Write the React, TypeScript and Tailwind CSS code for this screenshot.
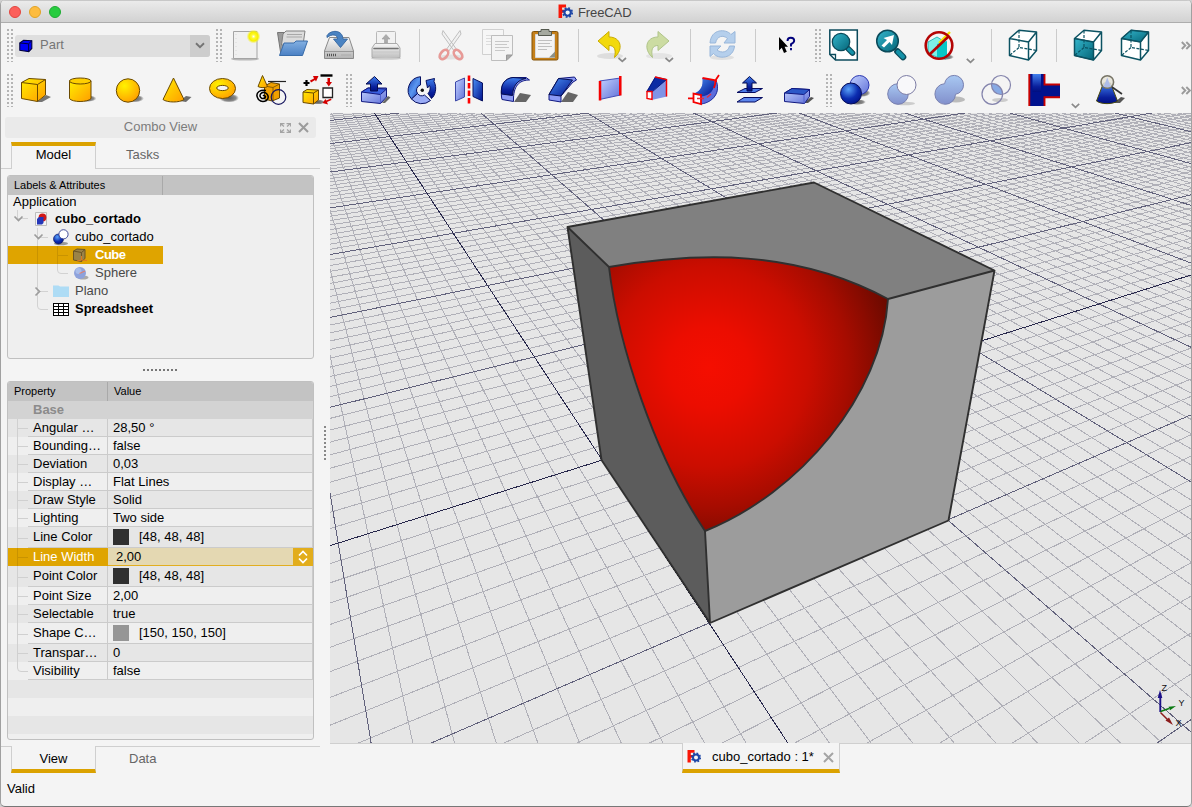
import React from "react";

type Kids = { children?: React.ReactNode };

/* ---------- toolbar primitives ---------- */

// Each icon is drawn in window coordinates; x/y name the window position of its cell.
function Ico({ x, y = 23, ml = "ml-[15px]", children }: Kids & { x: number; y?: number; ml?: string }) {
  return (
    <svg className={`h-[45px] w-8 shrink-0 overflow-visible ${ml}`} viewBox={`${x} ${y} 32 45`}>
      {children}
    </svg>
  );
}

function Grip({ ml }: { ml: string }) {
  return (
    <svg className={`h-[33px] w-[6px] shrink-0 ${ml}`} viewBox="0 0 6 33" shapeRendering="crispEdges">
      <path d="M1 0V33M5 0V33" stroke="#b4b4b4" strokeWidth="2" strokeDasharray="2 2" />
    </svg>
  );
}

function Sep({ ml }: { ml: string }) {
  return <div className={`h-[33px] w-px shrink-0 bg-[#cbcbcb] ${ml}`} />;
}

function Drop({ ml }: { ml: string }) {
  return (
    <svg className={`mt-[30px] h-[6px] w-[9px] shrink-0 ${ml}`} viewBox="0 0 9 6">
      <path d="M.8 .8L4.5 4.3L8.2 .8" fill="none" stroke="#8a8a8a" strokeWidth="1.7" />
    </svg>
  );
}

function More({ ml }: { ml: string }) {
  return (
    <svg className={`h-[9px] w-[10px] shrink-0 ${ml}`} viewBox="0 0 10 9">
      <path d="M.8 1L4.3 4.5L.8 8M5.3 1L8.8 4.5L5.3 8" fill="none" stroke="#9b9b9b" strokeWidth="1.9" />
    </svg>
  );
}

function Defs() {
  return (
    <svg className="absolute h-0 w-0">
      <defs>
        <linearGradient id="yel" x1="0" y1="0" x2="1" y2="1">
          <stop offset="0" stopColor="#ffee00" /><stop offset="1" stopColor="#ff9d00" />
        </linearGradient>
        <radialGradient id="yelr" cx=".35" cy=".3" r=".8">
          <stop offset="0" stopColor="#fff200" /><stop offset="1" stopColor="#ff9a00" />
        </radialGradient>
        <linearGradient id="blu" x1="0" y1="0" x2="1" y2="1">
          <stop offset="0" stopColor="#4a90f5" /><stop offset="1" stopColor="#00108c" />
        </linearGradient>
        <linearGradient id="ring" x1="0" y1="0" x2="1" y2="1">
          <stop offset="0" stopColor="#1c48b8" /><stop offset=".5" stopColor="#5a96f0" /><stop offset="1" stopColor="#1438b0" />
        </linearGradient>
        <radialGradient id="blur" cx=".38" cy=".3" r=".75">
          <stop offset="0" stopColor="#58a0f8" /><stop offset=".6" stopColor="#0c2db0" /><stop offset="1" stopColor="#00128a" />
        </radialGradient>
        <linearGradient id="lbl" x1="0" y1="0" x2="1" y2="1">
          <stop offset="0" stopColor="#c3d2ff" /><stop offset="1" stopColor="#6070d8" />
        </linearGradient>
        <linearGradient id="pbl" x1="0" y1="0" x2="0" y2="1">
          <stop offset="0" stopColor="#a8c8f2" /><stop offset="1" stopColor="#8290cc" />
        </linearGradient>
        <linearGradient id="dbl" x1="0" y1="0" x2="0" y2="1">
          <stop offset="0" stopColor="#4080ee" /><stop offset=".7" stopColor="#0a209c" /><stop offset="1" stopColor="#000e80" />
        </linearGradient>
        <linearGradient id="teal" x1="0" y1="0" x2="1" y2="1">
          <stop offset="0" stopColor="#34b6cc" /><stop offset="1" stopColor="#046578" />
        </linearGradient>
        <linearGradient id="fold" x1="0" y1="0" x2="0" y2="1">
          <stop offset="0" stopColor="#83b0e2" /><stop offset="1" stopColor="#4a80c4" />
        </linearGradient>
        <linearGradient id="gry" x1="0" y1="0" x2="0" y2="1">
          <stop offset="0" stopColor="#f8f8f8" /><stop offset="1" stopColor="#b4b4b4" />
        </linearGradient>
        <radialGradient id="sun">
          <stop offset="0" stopColor="#fffff0" /><stop offset=".3" stopColor="#fff830" /><stop offset=".65" stopColor="#f6f000" /><stop offset="1" stopColor="#f8f040" stopOpacity="0" />
        </radialGradient>
        <radialGradient id="shd">
          <stop offset="0" stopColor="#333" stopOpacity=".8" /><stop offset=".7" stopColor="#444" stopOpacity=".6" /><stop offset="1" stopColor="#555" stopOpacity="0" />
        </radialGradient>
        <radialGradient id="red" gradientUnits="userSpaceOnUse" cx="709" cy="367" r="200">
          <stop offset="0" stopColor="#f50e00" /><stop offset=".2" stopColor="#ec0d00" /><stop offset=".5" stopColor="#cb0d00" />
          <stop offset=".7" stopColor="#a60c00" /><stop offset=".82" stopColor="#8a0b00" /><stop offset=".94" stopColor="#6c0a00" />
        </radialGradient>
      </defs>
    </svg>
  );
}

function Logo({ cls }: { cls: string }) {
  return (
    <svg className={`shrink-0 ${cls}`} viewBox="0 0 14 14">
      <path d="M.5 .5H7.5V3.3H3.8V5.4H6.5V8.2H3.8V13H.5Z" fill="#f91607" />
      <g stroke="#1d46a6" fill="none">
        <circle cx="9" cy="8" r="3" fill="#f4f4f4" strokeWidth="2" />
        <circle cx="9" cy="8" r="4.3" strokeWidth="1.6" strokeDasharray="1.7 1.68" />
      </g>
    </svg>
  );
}

/* ---------- toolbars ---------- */

function FileBar() {
  return (
    <div className="flex h-[45px] items-center">
      <Grip ml="ml-[6px]" />
      <div className="ml-[2px] flex h-[22px] w-[195px] shrink-0 items-center overflow-hidden rounded-[3px] bg-[#dfdfdf]">
        <svg className="ml-[4px] h-[14px] w-[14px]" viewBox="0 0 14 14">
          <path d="M.8 4L4.6 1.2L12.8 1.7V9.5L9.8 12.6L.8 11.2Z" fill="#0000f4" stroke="#000040" strokeWidth="1.1" />
          <path d="M.8 4L9.6 4.8L12.8 1.7M9.6 4.8V12.5" fill="none" stroke="#000040" strokeWidth="1" />
        </svg>
        <span className="ml-[7px] flex-1 pb-[3px] text-[13px] leading-none text-[#757575]">Part</span>
        <div className="flex h-full w-5 items-center justify-center bg-[#cdcdcd]">
          <svg className="h-[7px] w-[10px]" viewBox="0 0 10 7"><path d="M1 1.3L5 5.2L9 1.3" fill="none" stroke="#747474" strokeWidth="1.9" /></svg>
        </div>
      </div>
      <Grip ml="ml-[6px]" />
      <Ico x={229} ml="ml-[7px]">
        <ellipse cx="245" cy="59" rx="14" ry="1.6" fill="#b8b8b8" />
        <path d="M233.500 31.500H257V58.500H233.500Z" fill="#f0f0f0" stroke="#a4a4a4" />
        <path d="M236 34V57" stroke="#d8d8d8" strokeDasharray="1 3" />
        <circle cx="253.500" cy="36.500" r="7" fill="url(#sun)" />
      </Ico>
      <Ico x={276}>
        <path d="M277.500 32.500H284L286 55H281Z" fill="#9b9b9b" stroke="#757575" />
        <path d="M283 34L286 31H305L303 45H281.500Z" fill="#dcdcdc" stroke="#808080" />
        <path d="M287 34.500H302M286.500 37H302" stroke="#a8a8a8" />
        <path d="M284 43H294L296 41H307.500L302.500 55.500H279.500Z" fill="url(#fold)" stroke="#3a6daa" strokeLinejoin="round" />
      </Ico>
      <Ico x={323}>
        <path d="M329.500 37.500H349L353.500 51V58.500H324.500V51Z" fill="url(#gry)" stroke="#8a8a8a" strokeLinejoin="round" />
        <path d="M325 51.500H353" stroke="#999" /><path d="M327 55H337" stroke="#555" strokeWidth="2.600" strokeDasharray="1 1" /><path d="M341 55H351" stroke="#aaa" />
        <path d="M327 35.500C331 29.500 342.500 29.500 343 39H347.500L340.500 47.500L333.500 39H337.500C337.500 34.500 332 33.500 327 37.500Z" fill="#4a83c2" stroke="#34659f" strokeWidth=".9" />
      </Ico>
      <Ico x={370}>
        <g opacity=".8">
          <path d="M376.500 44V32.500Q376.500 31.500 377.500 31.500H394.500Q395.500 31.500 395.500 32.500V44" fill="#f2f2f2" stroke="#aaa" />
          <path d="M386 34.500L390 39H387.500V43H384.500V39H382Z" fill="#999" stroke="#888" strokeWidth=".6" />
          <path d="M375 43.500H397L400 48V57.500H372V48Z" fill="url(#gry)" stroke="#999" strokeLinejoin="round" />
          <path d="M374 48.500H398" stroke="#555" strokeWidth="1.600" strokeLinecap="round" /><path d="M373 52H399" stroke="#bbb" />
        </g>
        <ellipse cx="386" cy="58.500" rx="15" ry="1.300" fill="#ccc" />
      </Ico>
      <Sep ml="ml-[17px]" />
      <Ico x={435}>
        <ellipse cx="451" cy="57" rx="13" ry="2.500" fill="#e2e2e2" />
        <path d="M443 30.500L457 50L454.500 51.500L442 34ZM460 30.500L446 50L448.500 51.500L461 34Z" fill="#f1f1f1" stroke="#b9b9b9" strokeWidth=".9" />
        <ellipse cx="444" cy="54.500" rx="5.300" ry="3.300" fill="none" stroke="#e79a97" strokeWidth="2.700" transform="rotate(-50 444 54.500)" />
        <ellipse cx="458" cy="54.500" rx="5.300" ry="3.300" fill="none" stroke="#e79a97" strokeWidth="2.700" transform="rotate(50 458 54.500)" />
      </Ico>
      <Ico x={482}>
        <path d="M482.500 29.500H503.500V54.500H482.500Z" fill="#f6f6f6" stroke="#d0d0d0" />
        <path d="M486 35.500H495M486 38.500H491M486 41.500H491M486 44.500H491" stroke="#dcdcdc" />
        <path d="M491.500 35.500H512.500V55L507 60.500H491.500Z" fill="#f4f4f4" stroke="#bdbdbd" />
        <path d="M495 41.500H509M495 44.500H507M495 47.500H509M495 50.500H505" stroke="#c8c8c8" />
        <path d="M506.500 60V55H512Z" fill="#aaa" stroke="#999" />
      </Ico>
      <Ico x={529}>
        <rect x="532" y="31.500" width="26" height="28.500" rx="1.500" fill="#c5801a" stroke="#825209" />
        <path d="M535.500 34.500H554.500V57.500H535.500Z" fill="#f4f4f4" stroke="#d8d8d8" />
        <path d="M538 40.500H552M538 43.500H550M538 46.500H552M538 49.500H547" stroke="#c0c0c0" />
        <path d="M539 31.500H541V29.500H549V31.500H551.500V35.500H538.500V31.500Z" fill="#a5a99f" stroke="#555a50" />
        <path d="M549 57.500L555 51.500V57.500Z" fill="#8b8f86" />
      </Ico>
      <Sep ml="ml-[17px]" />
      <Ico x={596} ml="ml-[17px]">
        <ellipse cx="610" cy="56" rx="13" ry="3" fill="#ddd" />
        <path d="M598 41L609 31.500V37C621 37 624 49 614.500 57.500C616.500 49 614 45.500 609 45.500V50.500Z" fill="#f2d90c" stroke="#c9ab00" strokeLinejoin="round" />
        <path d="M618.500 58L622.300 61.300L626 58" fill="none" stroke="#8a8a8a" strokeWidth="1.700" />
      </Ico>
      <Ico x={643}>
        <ellipse cx="659" cy="56" rx="13" ry="3" fill="#e4e4e4" />
        <path d="M669 41L658 31.500V37C646 37 643 49 652.500 57.500C650.500 49 653 45.500 658 45.500V50.500Z" fill="#ccdca2" stroke="#b0c48a" strokeLinejoin="round" />
        <path d="M665.500 58L669.300 61.300L673 58" fill="none" stroke="#8a8a8a" strokeWidth="1.700" />
      </Ico>
      <Sep ml="ml-[15px]" />
      <Ico x={706}>
        <ellipse cx="722" cy="57.500" rx="12" ry="2.500" fill="#e0e0e0" />
        <path d="M710 43C711 28.500 726 28.500 731 34.500L735 31.500V43H724L727.500 38.500C723 34.500 717 36 715.500 43Z" fill="#b5cfec" stroke="#98b6da" strokeLinejoin="round" />
        <path d="M734.500 46C733.500 59 718 59.500 713.500 53.500L710 56.500V46H721L717 50C721.500 53.500 728 52.500 729.500 46Z" fill="#b5cfec" stroke="#98b6da" strokeLinejoin="round" />
      </Ico>
      <Sep ml="ml-[17px]" />
      <Ico x={770} ml="ml-[14px]">
        <path d="M779 37V50.500L781.800 47.800L784 53L786.800 51.800L784.600 46.800H788Z" fill="#000" />
        <path d="M787.500 41Q787.500 37.800 790.800 37.800Q794.200 37.800 794.200 40.800Q794.200 42.500 791 44.200V46.500M791 48V50.300" fill="none" stroke="#00007c" strokeWidth="1.900" />
      </Ico>
      <Grip ml="ml-[13px]" />
      <Ico x={827} ml="ml-[6px]">
        <path d="M829.800 30H857.300V60H835.500L829.800 54.500Z" fill="#fff" stroke="#0c4b5c" strokeWidth="1.500" />
        <path d="M830 54.500H835.500V60" fill="none" stroke="#0c4b5c" strokeWidth="1.300" />
        <path d="M848 48.500L852.500 53" stroke="#0b4a5a" strokeWidth="5.600" strokeLinecap="round" />
        <path d="M848.500 49L852.300 52.800" stroke="#1391a8" strokeWidth="3.400" strokeLinecap="round" />
        <circle cx="841" cy="42" r="8.700" fill="url(#teal)" stroke="#0b4a5a" strokeWidth="1.300" />
      </Ico>
      <Ico x={874}>
        <path d="M897.500 51.500L903 57" stroke="#0b4a5a" strokeWidth="6.600" strokeLinecap="round" />
        <path d="M898 52L902.800 56.800" stroke="#1391a8" strokeWidth="4.200" strokeLinecap="round" />
        <circle cx="887.500" cy="41" r="10.800" fill="url(#teal)" stroke="#0b4a5a" strokeWidth="1.500" />
        <path d="M881.500 45.500L887 40L883.500 38L894 35L892 45L889.500 42L884 47.500Z" fill="#fff" />
      </Ico>
      <Ico x={923} ml="ml-[17px]">
        <ellipse cx="945" cy="57" rx="9" ry="3" fill="url(#shd)" />
        <path d="M928 42L937 37L946 42.500V59L937 57L928 53.500Z" fill="#7ef0e8" stroke="#1aa" strokeWidth=".8" />
        <path d="M937 44L947 41V57L937 59Z" fill="#08c8c8" />
        <path d="M950 32L939 43" stroke="#f3e500" strokeWidth="2.400" />
        <circle cx="939" cy="45.500" r="13.300" fill="none" stroke="#b40404" strokeWidth="2.600" />
        <path d="M929.500 54.500L948.500 36.500" stroke="#b40404" strokeWidth="2.600" />
      </Ico>
      <Drop ml="ml-[11px]" />
      <Sep ml="ml-[16px]" />
      <Ico x={1007}><WireCube x={1009} /></Ico>
      <Sep ml="ml-[17px]" />
      <Ico x={1071} ml="ml-[14px]"><WireCube x={1074} face="M0 9.500L19 13V31L0 26.500Z" /></Ico>
      <Ico x={1118}><WireCube x={1121} face="M0 9.500L9.500 1.200L27 3L19 13Z" /></Ico>
      <More ml="ml-[31px]" />
    </div>
  );
}

function WireCube({ x, face }: { x: number; face?: string }) {
  return (
    <g transform={`translate(${x + 0.5} 29)`} fill="none" stroke="#0b5262">
      <path d="M0 9.500L9.500 1.200L27 3V21.500L19 31L0 26.500Z" fill="#fff" stroke="none" />
      {face && <path d={face} fill="url(#teal)" />}
      <path d="M9.500 1.500V18.500L27 21.500M9.500 18.500L0 26.500" strokeDasharray="3 1.500" strokeWidth="1.200" />
      <path d="M0 9.500L9.500 1.200L27 3V21.500L19 31L0 26.500ZM0 9.500L19 13L27 3M19 13V31" strokeWidth="1.500" strokeLinejoin="round" />
    </g>
  );
}

function PartBar() {
  const y = 68;
  return (
    <div className="flex h-[45px] items-center">
      <Grip ml="ml-[6px]" />
      <Ico x={19} y={y} ml="ml-[6px]">
        <path d="M37 102L46 95L51 97L42 102Z" fill="#555" opacity=".8" />
        <path d="M21.500 82.500L29 78.500L45.500 79.500V95L37.500 101.500L21.500 98.500Z" fill="url(#yel)" stroke="#6b4a00" strokeLinejoin="round" />
        <path d="M21.500 82.500L37.500 84.500L45.500 79.500M37.500 84.500V101.500" fill="none" stroke="#6b4a00" />
      </Ico>
      <Ico x={66} y={y}>
        <ellipse cx="87" cy="98.500" rx="9.500" ry="3.500" fill="url(#shd)" />
        <path d="M69.500 81V98.500C72 102.500 88 102.500 91 98.500V81Z" fill="url(#yel)" stroke="#6b4a00" />
        <ellipse cx="80.200" cy="81" rx="10.800" ry="3" fill="#ffcf00" stroke="#6b4a00" />
      </Ico>
      <Ico x={113} y={y}>
        <ellipse cx="134" cy="98.500" rx="10" ry="4" fill="url(#shd)" />
        <circle cx="128" cy="90.500" r="11.700" fill="url(#yelr)" stroke="#6b4a00" />
      </Ico>
      <Ico x={160} y={y}>
        <path d="M180 101L186 96L191.500 97L186 102Z" fill="#555" opacity=".85" />
        <path d="M173.500 78L163 99.500C167 102.800 180 102.800 184 99.500Z" fill="url(#yel)" stroke="#6b4a00" strokeLinejoin="round" />
      </Ico>
      <Ico x={207} y={y}>
        <ellipse cx="229" cy="98" rx="10" ry="4.500" fill="url(#shd)" />
        <ellipse cx="222.500" cy="88.500" rx="13" ry="10" fill="url(#yelr)" stroke="#6b4a00" />
        <ellipse cx="222.500" cy="88" rx="5.800" ry="2.600" fill="#f4f4f4" stroke="#6b4a00" />
      </Ico>
      <Ico x={254} y={y}>
        <path d="M264.500 86L271 82.500L279.500 84V98L272 101L264.500 99Z" fill="#f0a000" stroke="#6b4a00" />
        <path d="M264.500 86L273 87.500L279.500 84M273 87.500V100" fill="none" stroke="#8a5c00" />
        <path d="M262.500 75.500L258 86.500C260 88 266 88 267.500 86.500Z" fill="url(#yel)" stroke="#6b4a00" />
        <path d="M268 81.500H286" stroke="#222" strokeWidth="1.200" />
        <path d="M263 96Q264.500 94.500 265.500 96.500Q265 99 262 98.500Q259 97 260.500 94Q263 91 266.500 93.500Q270 97 266.500 100.500Q262 103 258.500 99.500Q255 94.500 259 91.500Q262 89.500 266 90.500" fill="none" stroke="#000" strokeWidth="1.500" />
        <circle cx="278.500" cy="97" r="7.300" fill="none" stroke="#15155e" strokeWidth="1.200" />
      </Ico>
      <Ico x={301} y={y}>
        <ellipse cx="318" cy="102" rx="7" ry="2.500" fill="url(#shd)" />
        <path d="M303 92L307 89.500L318.500 90V100L313.500 104L303 102.500Z" fill="url(#yel)" stroke="#6b4a00" />
        <path d="M303 92L313.500 93L318.500 90M313.500 93V104" fill="none" stroke="#6b4a00" />
        <path d="M306.500 80V86M303.500 83H309.500" stroke="#000" strokeWidth="2.200" />
        <path d="M320.500 75.500H332.500" stroke="#000" strokeWidth="2.400" />
        <path d="M323 88H332.500V97.500H323Z" fill="#fff" stroke="#222" strokeWidth="1.300" />
        <path d="M310 80.500L314 78.500L313 76L318.500 76L316 81.500L315 80L311 82.500ZM327.500 78H330V82H332L328.800 86.500L325.800 82H327.500ZM331.500 100L327 102L328 104.500L322.500 103L325.500 99L326.300 100.600L331 98.500Z" fill="#d40000" />
      </Ico>
      <Grip ml="ml-[13px]" />
      <Ico x={359} y={y} ml="ml-[7px]">
        <path d="M382 103L388 96L390.500 97.500L385 103Z" fill="#666" />
        <path d="M361.500 92L368 88H386.500V97L380.500 103.500L361.500 101.500Z" fill="url(#lbl)" stroke="#101880" strokeLinejoin="round" />
        <path d="M361.500 92L380.500 94.500L386.500 89L368 88Z" fill="#3a5fe0" stroke="#101880" strokeLinejoin="round" />
        <path d="M380.500 94.500V103" stroke="#5060d0" />
        <path d="M374.500 76.500L382 84H377.500V91H370.500V84H366Z" fill="url(#dbl)" stroke="#050c50" strokeLinejoin="round" />
      </Ico>
      <Ico x={406} y={y}>
        <path d="M420.500 76.700A13.500 13.500 0 0 0 411.500 99L417.500 93.500A5.500 5.500 0 0 1 420.500 85Z" fill="url(#ring)" stroke="#071060" />
        <path d="M411.500 99L417.500 93.500A5.500 5.500 0 0 0 424.500 95L430.500 100.500A13.500 13.500 0 0 1 411.500 99Z" fill="#9aacf6" stroke="#071060" />
        <path d="M426 80.500L434.500 78.500L434 81.500C437.500 88 435 96 431.500 98.500L428 93.500C430.500 90.500 430.500 87.500 429.500 85.500L427.500 88Z" fill="url(#dbl)" stroke="#071060" strokeLinejoin="round" />
        <circle cx="422.300" cy="90.300" r="1.700" fill="#111" />
      </Ico>
      <Ico x={453} y={y}>
        <path d="M455.500 82L464.500 78V97L455.500 101Z" fill="url(#lbl)" stroke="#3c48a8" />
        <path d="M473 78.500L482.500 83V101L473 96.500Z" fill="url(#blu)" stroke="#071060" />
        <path d="M469 75.500V104" stroke="#f00" strokeWidth="2.600" strokeDasharray="5.500 2" />
      </Ico>
      <Ico x={500} y={y}>
        <path d="M514 102L520 93L531 95L526 102Z" fill="#666" />
        <path d="M501.500 97C500 84 505 78.500 513 77.500H526L529.500 80C521 80 514 84 513.500 98V101.500L502 99.500Z" fill="#8c9af4" stroke="#101880" />
        <path d="M501.500 94C500.500 84 505 78.500 513 77.500L526 78.500C517 80 513 86 512.500 95.500Z" fill="url(#dbl)" stroke="#050c50" />
      </Ico>
      <Ico x={547} y={y}>
        <path d="M561 102L568 92L578 95L573 102Z" fill="#666" />
        <path d="M549 94.500L558.500 78.500L574.500 77L576.500 80L573 82L561 96V102L549 100Z" fill="#8c9af4" stroke="#101880" />
        <path d="M549 94.500L558.500 78.500L572.500 80L561 96Z" fill="url(#blu)" stroke="#050c50" />
      </Ico>
      <Ico x={594} y={y}>
        <path d="M599.500 81L620.500 78V95L599.500 99.500Z" fill="url(#lbl)" stroke="#4450b8" />
        <path d="M600 81V100.500M620.300 76V95.500" stroke="#f50000" strokeWidth="2.500" />
      </Ico>
      <Ico x={641} y={y}>
        <path d="M655 77L646.500 91.500L652 92L667 80L656 77Z" fill="#0c2ba4" />
        <path d="M652 91.500L667 79.500V96.500L651.500 100Z" fill="#7f93e6" />
        <path d="M655.500 77L666.500 79.500L652 92L647 91.500L655.500 77" fill="none" stroke="#0a1a80" />
        <path d="M655 77L666.500 79.500V96.500" fill="none" stroke="#f50000" strokeWidth="1.500" />
        <path d="M647 91.500H652V99.500L647 98.500Z" fill="#fff" stroke="#f50000" strokeWidth="1.400" />
      </Ico>
      <Ico x={688} y={y}>
        <path d="M702.500 78L716 80.500C722 92 713 103 701 104L694 93.500C701 91 703.500 86 702.500 78Z" fill="#5c6cdc" />
        <path d="M702.500 78L714 80C716 89 710 96 701 96.500L694 93.500C701 91 703.500 86 702.500 78Z" fill="url(#blu)" />
        <path d="M716 80.500C721 92 713 102.500 701 104" fill="none" stroke="#2535a0" />
        <path d="M702.500 78L714.500 80C716 81 715 85 714 88M719 75L716 79.500V82" fill="none" stroke="#f50000" strokeWidth="1.800" />
        <path d="M688 98.300H693.500V93.500L701 95V104L693.500 102V98.500" fill="#fff" stroke="#f50000" strokeWidth="1.800" />
        <path d="M697 98.500H704M707 97.500L711 94" stroke="#e03040" strokeWidth="1.600" />
      </Ico>
      <Ico x={735} y={y}>
        <path d="M744 97.500L737 102H755L762.500 97.500Z" fill="#5c86ec" stroke="#060c60" strokeLinejoin="round" />
        <path d="M745 88.500L737 92.500H755L762.500 88.500Z" fill="#4a7ae8" stroke="#060c60" strokeLinejoin="round" />
        <path d="M749.500 76.500L756.500 83H752V91H747V83H742.500Z" fill="url(#dbl)" stroke="#050c50" strokeLinejoin="round" />
      </Ico>
      <Ico x={782} y={y}>
        <path d="M804 103L811 97L814 98L808 103Z" fill="#555" />
        <path d="M784.500 93L792 88.500L809.500 89.500V96.500L804.500 103.500L784.500 101.500Z" fill="url(#lbl)" stroke="#101880" strokeLinejoin="round" />
        <path d="M784.500 93L792 88.500L809.500 89.500L804 94.500Z" fill="#2c58c8" stroke="#101880" strokeLinejoin="round" />
        <path d="M804 94.500V103.500" stroke="#5060d0" />
      </Ico>
      <Grip ml="ml-[12px]" />
      <Ico x={839} y={y} ml="ml-[7px]">
        <ellipse cx="862" cy="93" rx="8.500" ry="4" fill="url(#shd)" /><ellipse cx="857" cy="102" rx="9" ry="3" fill="url(#shd)" />
        <circle cx="859.500" cy="85" r="9.500" fill="url(#lbl)" stroke="#2a36b0" />
        <circle cx="851" cy="93.500" r="10.500" fill="url(#blur)" stroke="#040c58" />
      </Ico>
      <Ico x={886} y={y}>
        <ellipse cx="905" cy="103.500" rx="10" ry="1.800" fill="#ccc" />
        <circle cx="898" cy="94" r="10.300" fill="url(#pbl)" stroke="#7880b0" />
        <circle cx="906.500" cy="85" r="9.500" fill="#f8f8fa" stroke="#7c7ca4" />
      </Ico>
      <Ico x={933} y={y}>
        <ellipse cx="956" cy="99.500" rx="9" ry="3" fill="#bbb" />
        <path d="M944.600 83.700A9.500 9.500 0 1 1 955.500 94.300A10.300 10.300 0 1 1 944.600 83.700Z" fill="url(#pbl)" stroke="#7880b0" />
      </Ico>
      <Ico x={980} y={y}>
        <ellipse cx="1000" cy="100" rx="8" ry="2" fill="#ccc" />
        <path d="M991.500 83.700A10.300 10.300 0 0 1 1002.500 94.200A9.500 9.500 0 0 1 991.500 83.700Z" fill="#88aae4" />
        <circle cx="992.300" cy="94" r="10.300" fill="none" stroke="#8484ac" strokeWidth="1.200" />
        <circle cx="1001" cy="85" r="9.500" fill="none" stroke="#8484ac" strokeWidth="1.200" />
      </Ico>
      <Ico x={1027} y={y}>
        <path d="M1029 74H1044V85H1060V97H1044V106H1029Z" fill="#00128e" />
        <path d="M1032.500 74H1041V92H1032.500Z" fill="url(#dbl)" />
        <path d="M1029.300 74V106M1044.500 74V84.500H1060M1060 97.200H1044.500V106" fill="none" stroke="#c80000" strokeWidth="1.900" />
      </Ico>
      <Drop ml="ml-[12px]" />
      <Ico x={1094} y={y} ml="ml-[14px]">
        <path d="M1114 103L1121 97L1125 98L1120 103Z" fill="#555" />
        <path d="M1103.500 83L1096.500 101C1101 104.500 1113 104.500 1117.500 101L1110.500 83Z" fill="url(#dbl)" stroke="#4a4a10" />
        <circle cx="1107.300" cy="82" r="6.300" fill="#e6e4d8" fillOpacity=".85" stroke="#777466" strokeWidth="1.600" />
        <path d="M1107.300 77.500L1103.500 87H1110.800Z" fill="#aebce8" />
        <path d="M1112 87L1122 94" stroke="#333" strokeWidth="1.600" />
      </Ico>
      <More ml="ml-[55px]" />
    </div>
  );
}

/* ---------- model tree ---------- */

function Row({ y, w, label, cls = "", rowCls = "", children }: Kids & { y: number; w: number; label: string; cls?: string; rowCls?: string }) {
  return (
    <div className={`flex h-[18px] w-[155px] items-center ${rowCls}`}>
      <svg className="h-[18px] shrink-0 overflow-visible" style={{ width: w }} viewBox={`8 ${y} ${w} 18`}>{children}</svg>
      <span className={`whitespace-nowrap pb-[2px] text-[13px] leading-none ${cls}`}>{label}</span>
    </div>
  );
}

const branch = { fill: "none", stroke: "#d2d2d2", strokeWidth: 1 };
const arrow = { fill: "none", stroke: "#9c9c9c", strokeWidth: 1.7 };

function Tree() {
  return (
    <div className="ml-[6px] mt-[6px] h-[184px] w-[307px] overflow-hidden rounded-[3px] border border-[#c0c0c0] bg-[#efefef]">
      <div className="flex h-[19px] items-center bg-[#c3c3c3] text-[11px] leading-none">
        <div className="flex h-full w-[155px] items-center border-r border-[#a9a9a9] pl-[6px]"><span className="tracking-[-0.03px]">Labels &amp; Attributes</span></div>
      </div>
      <div className="flex h-[15px] items-center pb-[2px] pl-[5px] text-[13px] leading-none">Application</div>
      <Row y={210} w={47} label="cubo_cortado" cls="font-bold">
        <path d="M17.500 210V218.500H28" {...branch} /><path d="M14.500 216.500L18.500 220.500L22.500 216.500" {...arrow} />
        <path d="M35.500 212.500H46.500V225.500H35.500Z" fill="#f4f4f4" stroke="#bdbdbd" />
        <circle cx="42.500" cy="217.500" r="3.900" fill="#d01818" /><path d="M37 219L39 217H43.500V223L42 224.500H37Z" fill="#2436b8" />
      </Row>
      <Row y={228} w={67} label="cubo_cortado">
        <path d="M37.500 228V246M37.500 237.500H48" {...branch} /><path d="M34.500 234.500L38.500 238.500L42.500 234.500" {...arrow} />
        <ellipse cx="61" cy="243.500" rx="7" ry="1.700" fill="#999" />
        <circle cx="58.500" cy="239" r="5" fill="url(#blur)" stroke="#040c58" strokeWidth=".6" /><circle cx="63.500" cy="234.300" r="4.600" fill="#fff" stroke="#303c90" strokeWidth=".9" />
      </Row>
      <Row y={246} w={87} label="Cube" cls="font-bold text-white tracking-[-0.5px]" rowCls="bg-[#dfa400]">
        <path d="M37.500 246V264M57.500 246V264M57.500 255.500H68" fill="none" stroke="#c99300" />
        <path d="M73.500 251L77 249L85 249.500V258.500L81.500 261.500L73.500 260Z" fill="#9b8347" stroke="#6a5526" />
        <path d="M73.500 251L81.500 252.500L85 249.500M81.500 252.500V261.500" fill="none" stroke="#6a5526" /><path d="M81.500 256V260L87 260.500M81.500 260L77 261" fill="none" stroke="#e07820" />
      </Row>
      <Row y={264} w={87} label="Sphere" cls="text-[#484848]">
        <path d="M37.500 264V282M57.500 264V270Q57.500 273.500 61 273.500H68" {...branch} />
        <ellipse cx="83" cy="277.500" rx="5.500" ry="2" fill="#aaa" /><circle cx="80" cy="273" r="6" fill="#8ea2dc" /><circle cx="78.500" cy="271" r="3" fill="#a9bdea" /><path d="M79.500 273.500L85 271" stroke="#e08070" strokeWidth="1.200" />
      </Row>
      <Row y={282} w={67} label="Plano" cls="text-[#484848]">
        <path d="M37.500 282V300M40 291.500H48" {...branch} /><path d="M35.500 287.500L39.500 291.500L35.500 295.500" {...arrow} />
        <path d="M53 285.500H58.500L60 286.500H69V297H53Z" fill="#aedcf5" />
      </Row>
      <Row y={300} w={67} label="Spreadsheet" cls="font-bold">
        <path d="M37.500 300V306Q37.500 309.500 41 309.500H48" {...branch} />
        <path d="M53.500 303.500H68.500V315.500H53.500ZM53.500 306.500H68.500M53.500 309.500H68.500M53.500 312.500H68.500M58.500 303.500V315.500M63.500 303.500V315.500" fill="#fff" stroke="#000" shapeRendering="crispEdges" />
      </Row>
    </div>
  );
}

/* ---------- property editor ---------- */

const props: { n: string; v: string; c?: string; sel?: boolean }[] = [
  { n: "Angular …", v: "28,50 °" },
  { n: "Bounding…", v: "false" },
  { n: "Deviation", v: "0,03" },
  { n: "Display …", v: "Flat Lines" },
  { n: "Draw Style", v: "Solid" },
  { n: "Lighting", v: "Two side" },
  { n: "Line Color", v: "[48, 48, 48]", c: "bg-[#303030]" },
  { n: "Line Width", v: "2,00", sel: true },
  { n: "Point Color", v: "[48, 48, 48]", c: "bg-[#303030]" },
  { n: "Point Size", v: "2,00" },
  { n: "Selectable", v: "true" },
  { n: "Shape C…", v: "[150, 150, 150]", c: "bg-[#969696]" },
  { n: "Transpar…", v: "0" },
  { n: "Visibility", v: "false" },
];

function Properties() {
  return (
    <div className="ml-[6px] mt-[10px] h-[359px] w-[307px] overflow-hidden rounded-[3px] border border-[#c0c0c0] bg-[#efefef] text-[13px] leading-none">
      <div className="flex h-[19px] items-center bg-[#c3c3c3] text-[11px]">
        <div className="flex h-full w-[100px] items-center border-r border-[#a9a9a9] pl-[6px]">Property</div>
        <span className="pl-[6px]">Value</span>
      </div>
      <div className="flex h-[18px] items-center bg-[#d3d3d3] pb-[2px] pl-[25px] font-bold text-[#8b8b8b]">Base</div>
      {props.map((p, i) => {
        const h = p.c ? 21 : 18;
        const last = i === props.length - 1;
        return (
          <div key={p.n} className={`flex ${p.c ? "h-[21px]" : "h-[18px]"} ${i % 2 ? "bg-[#efefef]" : "bg-[#e6e6e6]"}`}>
            <div className={`flex w-[100px] shrink-0 ${p.sel ? "bg-[#dfa400] text-white" : ""}`}>
              <svg className="h-full w-5 shrink-0" viewBox={`0 0 20 ${h}`}>
                <path d={last ? "M9.500 0V6Q9.500 9.500 13 9.500H20" : `M9.500 0V${h}M9.500 ${h === 21 ? 11.5 : 9.5}H20`} fill="none" stroke={p.sel ? "#c99300" : "#d0d0d0"} />
              </svg>
              <div className={`flex flex-1 items-center whitespace-nowrap border-r pl-[5px] ${p.sel ? "border-[#dfa400] pb-[2px]" : "border-b border-[#cbcbcb]"} ${p.c ? "pb-[2px]" : ""}`}>{p.n}</div>
            </div>
            {p.sel ? (
              <div className="flex flex-1 items-center border-b border-[#e2ae20] bg-[#e4d8b2] pl-[8px]">
                <span className="flex-1">{p.v}</span>
                <div className="flex h-[18px] w-5 shrink-0 items-center justify-center bg-[#e2ad1c]">
                  <svg className="h-[14px] w-[10px]" viewBox="0 0 10 14"><path d="M1 5.500L5 1.500L9 5.500M1 8.500L5 12.500L9 8.500" fill="none" stroke="#fff" strokeWidth="1.700" /></svg>
                </div>
              </div>
            ) : (
              <div className="flex flex-1 items-center border-b border-r border-[#cbcbcb] pl-[5px]">
                {p.c && <div className={`mr-[10px] h-4 w-4 ${p.c}`} />}
                <span className={p.c ? "pb-[2px]" : ""}>{p.v}</span>
              </div>
            )}
          </div>
        );
      })}
      <div className="h-[18px] bg-[#e6e6e6]" />
      <div className="h-[18px]" />
      <div className="h-[18px] bg-[#e6e6e6]" />
    </div>
  );
}

/* ---------- 3D view ---------- */

// Perspective projection of the ground plane, in window coordinates.
function project(x: number, y: number) {
  const w = 1 - 0.0224 * x + 0.01293 * y;
  return { w, px: (602.2 - 5.193 * x + 30.77 * y) / w, py: (460.1 + 2.335 * x - 1.275 * y) / w };
}

function gridLine(ax: number, ay: number, bx: number, by: number) {
  let a = { x: ax, y: ay };
  let b = { x: bx, y: by };
  const near = 0.15;
  const wa = project(a.x, a.y).w;
  const wb = project(b.x, b.y).w;
  if (wa < near && wb < near) return "";
  const t = (near - wa) / (wb - wa);
  const cut = { x: ax + (bx - ax) * t, y: ay + (by - ay) * t };
  if (wa < near) a = cut;
  if (wb < near) b = cut;
  const p = project(a.x, a.y);
  const q = project(b.x, b.y);
  return `M${p.px.toFixed(1)} ${p.py.toFixed(1)}L${q.px.toFixed(1)} ${q.py.toFixed(1)}`;
}

const X0 = -110, X1 = 60, Y0 = -40, Y1 = 130;
let minor = "", major = "", axes = "";
for (let x = X0; x <= X1; x++) {
  const l = gridLine(x, Y0, x, Y1);
  if (x === 0) axes += l; else if (x % 10 === 0) major += l; else minor += l;
}
for (let y = Y0; y <= Y1; y++) {
  const l = gridLine(X0, y, X1, y);
  if (y === 0) axes += l; else if (y % 10 === 0) major += l; else minor += l;
}

function Viewport() {
  return (
    <svg className="block h-[630px] w-[861px] bg-[#e6e6e6]" viewBox="330 113 861 630">
      <g fill="none" strokeWidth="1" shapeRendering="crispEdges">
        <path d={minor} stroke="#b0b0b8" />
        <path d={major} stroke="#62627c" />
        <path d={axes} stroke="#28284c" />
      </g>
      <g shapeRendering="crispEdges">
        <path d="M567.500 227L814 182.500L994.500 270.500L888 299L609 267Z" fill="#808080" />
        <path d="M567.500 227L609 267L705 531L710 623L601.500 460Z" fill="#5c5c5c" />
        <path d="M994.500 270.500L948.500 520.500L710 623L705 531L888 299Z" fill="#9c9c9c" />
      </g>
      <path d="M609 267C700 251.500 796 249.500 888 299C882 395 800 493 705 531C655 456 618 345 609 267Z" fill="url(#red)" stroke="#303030" strokeWidth="1.900" />
      <path d="M567.500 227L814 182.500L994.500 270.500L948.500 520.500L710 623L601.500 460ZM567.500 227L609 267M994.500 270.500L888 299M705 531L710 623" fill="none" stroke="#303030" strokeWidth="1.900" strokeLinejoin="round" />
      <g fill="none" strokeWidth="1.500">
        <path d="M1160.300 712V694" stroke="#1c1088" strokeWidth="1.900" /><path d="M1160 690L1162.300 698H1157.700Z" fill="#1c1088" />
        <path d="M1160.500 711.500L1169 708.500" stroke="#0b7a12" /><path d="M1176 706L1168.500 706.800L1170 710.300Z" fill="#0b7a12" />
        <path d="M1160.500 712.500L1168 720" stroke="#8c1c1c" /><path d="M1173 725L1165.500 720.500L1169 717.500Z" fill="#8c1c1c" />
      </g>
      <g fill="#111" fontFamily="Liberation Sans, sans-serif" fontSize="9">
        <text x="1161.500" y="691">Z</text><text x="1178.500" y="706">Y</text><text x="1175.500" y="726">X</text>
      </g>
    </svg>
  );
}

/* ---------- window ---------- */

export default function App() {
  return (
    <div className="h-[807px] w-[1192px] overflow-hidden bg-[#cfcfcf] font-['Liberation_Sans',Arial,sans-serif] text-[13px] text-black">
      <Defs />
      <div className="flex h-[807px] flex-col overflow-hidden rounded-[5px] border-b border-l border-r border-b-[#777] border-l-[#a0a0a0] border-r-[#a0a0a0] bg-[#f4f4f4]">
        <div className="flex h-[23px] shrink-0 items-center border-b border-[#adadad] border-t border-t-[#c8c8c8] bg-linear-to-b from-[#ebebeb] to-[#d2d2d2]">
          <div className="flex w-[557px] gap-2 pl-[8px]">
            <div className="h-3 w-3 rounded-full border border-[#e2463f] bg-[#fc605b]" />
            <div className="h-3 w-3 rounded-full border border-[#e1a325] bg-[#fdbc40]" />
            <div className="h-3 w-3 rounded-full border border-[#1eab32] bg-[#28cc40]" />
          </div>
          <Logo cls="h-[15px] w-[15px]" />
          <span className="ml-[5px] mt-[2px] text-[13px] leading-none text-[#454545] tracking-[-0.1px]">FreeCAD</span>
        </div>
        <div className="shrink-0">
          <FileBar />
          <PartBar />
        </div>
        <div className="flex flex-1">
          <div className="flex w-[319px] shrink-0 flex-col">
            <div className="ml-[4px] mt-[4px] flex h-[21px] w-[311px] shrink-0 items-center rounded-[3px] bg-[#eaeaea]">
              <span className="w-[275px] pb-[2px] pl-[36px] text-center leading-none text-[#7c7c7c]">Combo View</span>
              <svg className="h-[10px] w-[11px]" viewBox="0 0 11 10">
                <path d="M.5 3.500V.5H4.500M6.500 .5H10.500V3.500M10.500 6.500V9.500H6.500M4.500 9.500H.5V6.500M1 1L4 3.500M10 1L7 3.500M10 9L7 6.500M1 9L4 6.500" fill="none" stroke="#a4a4a4" strokeWidth="1.300" />
              </svg>
              <svg className="ml-[7px] h-[11px] w-[11px]" viewBox="0 0 11 11"><path d="M1 1L10 10M10 1L1 10" stroke="#9c9c9c" strokeWidth="2" /></svg>
            </div>
            <div className="mt-[4px] flex h-[27px] shrink-0 leading-none">
              <div className="w-[10px] border-b border-[#cfcfcf]" />
              <div className="flex w-[85px] justify-center border-l border-r border-t-[4px] border-[#cfcfcf] border-t-[#dba200] pt-[2px]">Model</div>
              <div className="flex-1 border-b border-[#cfcfcf] pl-[30px] pt-[6px] text-[#666]">Tasks</div>
            </div>
            <Tree />
            <svg className="ml-[142px] mt-[10px] h-[2px] w-[34px] shrink-0" viewBox="0 0 34 2"><path d="M0 1H34" stroke="#777" strokeWidth="2" strokeDasharray="2 2" /></svg>
            <Properties />
            <div className="mt-[6px] flex h-[27px] shrink-0 leading-none">
              <div className="w-[10px] border-t border-[#cfcfcf]" />
              <div className="flex w-[85px] justify-center border-b-[4px] border-l border-r border-[#cfcfcf] border-b-[#dba200] pt-[6px]">View</div>
              <div className="flex-1 border-t border-[#cfcfcf] pl-[33px] pt-[5px] text-[#666]">Data</div>
            </div>
            <div className="pl-[6px] pt-[9px] leading-none">Valid</div>
          </div>
          <div className="flex w-[10px] shrink-0 justify-center pt-[313px]">
            <svg className="h-[34px] w-[2px]" viewBox="0 0 2 34"><path d="M1 0V34" stroke="#888" strokeWidth="2" strokeDasharray="2 2" /></svg>
          </div>
          <div className="flex flex-1 flex-col">
            <Viewport />
            <div className="flex h-[30px] leading-none">
              <div className="w-[352px] border-t border-[#cfcfcf]" />
              <div className="flex w-[158px] items-center border-b-[4px] border-l border-r border-[#cfcfcf] border-b-[#dba200] pl-[4px]">
                <Logo cls="h-[15px] w-[14px]" />
                <span className="ml-[11px] w-[108px] whitespace-nowrap">cubo_cortado : 1*</span>
                <svg className="ml-[3px] mt-[3px] h-[11px] w-[11px] shrink-0" viewBox="0 0 11 11"><path d="M1 1L10 10M10 1L1 10" stroke="#a4a4a4" strokeWidth="2" /></svg>
              </div>
              <div className="flex-1 border-t border-[#cfcfcf]" />
            </div>
          </div>
        </div>
      </div>
    </div>
  );
}
